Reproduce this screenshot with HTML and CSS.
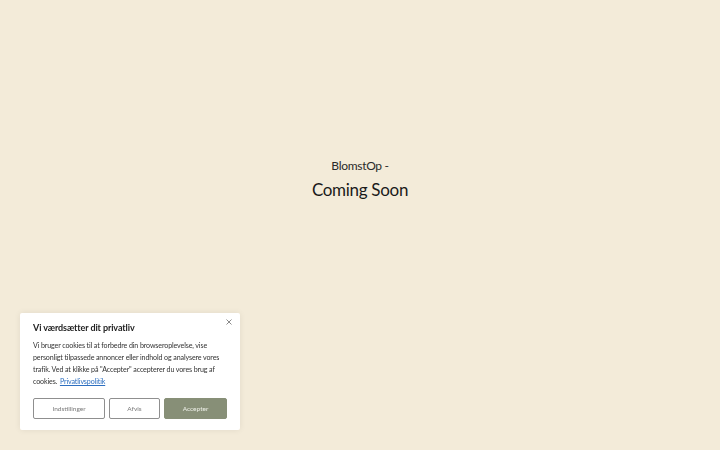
FILE: index.html
```html
<!DOCTYPE html>
<html lang="da">
  <head>
    <meta charset="UTF-8">
    <meta name="viewport" content="width=device-width, initial-scale=1.0">
    <link rel="stylesheet" href="styles.css">
    <title>BlomstOp - Coming Soon</title>
  </head>
  <body>
    <main class="hero">
      <p class="brand">BlomstOp -</p>
      <h1 class="headline">Coming Soon</h1>
    </main>

    <div class="cookie-banner">
      <button class="cookie-close" aria-label="Luk">
        <svg width="6" height="6" viewBox="0 0 6 6">
          <path d="M0.5 0.5 L5.5 5.5 M5.5 0.5 L0.5 5.5" stroke="#8a8a8a" stroke-width="1"/>
        </svg>
      </button>
      <h2 class="cookie-title">Vi værdsætter dit privatliv</h2>
      <p class="cookie-text">
        Vi bruger cookies til at forbedre din browseroplevelse, vise personligt tilpassede annoncer eller indhold og analysere vores trafik. Ved at klikke på "Accepter" accepterer du vores brug af cookies. <a href="#">Privatlivspolitik</a>
      </p>
      <div class="cookie-actions">
        <button class="btn btn-outline btn-settings">Indstillinger</button>
        <button class="btn btn-outline btn-reject">Afvis</button>
        <button class="btn btn-accept">Accepter</button>
      </div>
    </div>
  </body>
</html>
```

FILE: styles.css
```css
html, body {
  height: 100%;
}

body {
  margin: 0;
  background-color: #f3ebd9;
  font-family: Lato, "Open Sans", sans-serif;
  color: #1f1f1f;
}

.hero {
  display: flex;
  flex-direction: column;
  align-items: center;
  padding-top: 157px;
}

.brand {
  margin: 0;
  font-size: 12px;
  line-height: 18px;
  letter-spacing: -0.3px;
  color: #2a2a2a;
}

.headline {
  margin: 3px 0 0;
  font-size: 17px;
  line-height: 24px;
  font-weight: 400;
  letter-spacing: -0.3px;
  color: #1a1a1a;
}

/* cookie consent box, pinned bottom-left */
.cookie-banner {
  position: fixed;
  left: 20px;
  bottom: 20px;
  width: 220px;
  box-sizing: border-box;
  padding: 9px 13px 11px;
  background-color: #ffffff;
  border-radius: 2px;
  box-shadow: 0 0 6px rgba(0, 0, 0, 0.08);
}

.cookie-close {
  position: absolute;
  top: 6px;
  right: 8px;
  padding: 0;
  border: none;
  background: none;
  line-height: 0;
  cursor: pointer;
}

.cookie-title {
  margin: 0;
  font-size: 9px;
  line-height: 12px;
  font-weight: 700;
  letter-spacing: -0.1px;
  color: #222222;
}

.cookie-text {
  margin: 6px 0 0;
  font-size: 7.1px;
  line-height: 12px;
  letter-spacing: -0.12px;
  color: #333333;
}

.cookie-text a {
  margin-left: 1px;
  color: #2d6fc0;
}

.cookie-actions {
  display: flex;
  gap: 4px;
  margin-top: 10px;
}

.btn {
  height: 21px;
  padding: 0;
  font-family: inherit;
  font-size: 6.5px;
  border-radius: 2px;
  cursor: pointer;
}

.btn-outline {
  background: #ffffff;
  border: 1.5px solid #8f8f8f;
  color: #7a7a7a;
}

.btn-settings {
  width: 72px;
}

.btn-reject {
  width: 51px;
}

.btn-accept {
  flex: 1;
  background-color: #878f77;
  border: 1px solid #878f77;
  color: #eef0e8;
}
```
